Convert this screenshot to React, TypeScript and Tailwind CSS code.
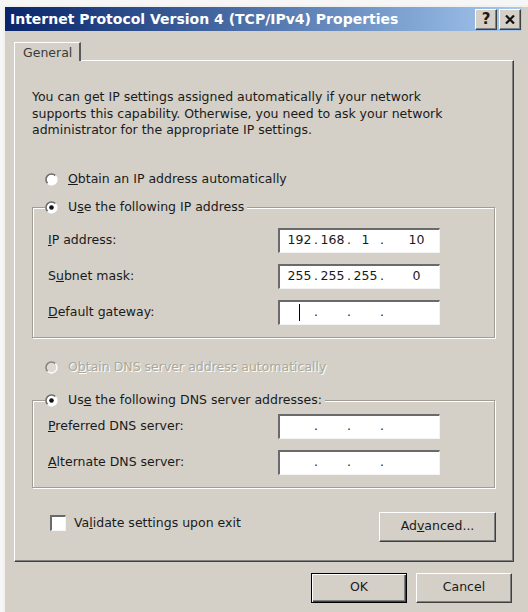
import React from "react";

// Classic 3D bevels shared by the controls
const raised =
  "border border-t-white border-l-white border-r-[#404040] border-b-[#404040] shadow-[inset_-1px_-1px_0_#808080]";
const sunken =
  "border-l-2 border-t-2 border-r border-b border-l-[#6a6a6a] border-t-[#6a6a6a] border-r-[#f4f4f4] border-b-[#f4f4f4]";

function Radio({ checked = false, disabled = false }: { checked?: boolean; disabled?: boolean }) {
  return (
    <svg width="13" height="13" viewBox="0 0 13 13" className="shrink-0">
      <circle cx="6.5" cy="6.5" r="5.5" fill={disabled ? "#dedad3" : "#fff"} />
      <path d="M2.6 10.4 A5.5 5.5 0 0 1 10.4 2.6" fill="none" stroke={disabled ? "#86837c" : "#6a6a6a"} strokeWidth="1.5" />
      <path d="M10.4 2.6 A5.5 5.5 0 0 1 2.6 10.4" fill="none" stroke="#fff" strokeWidth="1.3" />
      {checked && <circle cx="6.5" cy="6.5" r="2.3" fill="#111" />}
    </svg>
  );
}

function IpBox({ octets, caret = false }: { octets?: string[]; caret?: boolean }) {
  const vals = octets ?? ["", "", "", ""];
  return (
    <div className={`flex h-[25px] w-[162px] items-center bg-white pl-[7px] ${sunken}`}>
      {vals.map((v, i) => (
        <React.Fragment key={i}>
          <div className={`flex h-full items-center justify-center ${i === 3 ? "flex-1 pl-[8px]" : "w-[25px]"}`}>
            {caret && i === 0 ? <div className="h-[17px] w-px bg-black" /> : v}
          </div>
          {i < 3 && <div className="w-[8px] text-center">.</div>}
        </React.Fragment>
      ))}
    </div>
  );
}

function Field({ label, octets, caret }: { label: React.ReactNode; octets?: string[]; caret?: boolean }) {
  return (
    <div className="ml-[3px] flex items-center">
      <div className="w-[230px]">{label}</div>
      <IpBox octets={octets} caret={caret} />
    </div>
  );
}

export default function App() {
  return (
    <div className="h-[612px] w-[528px] overflow-hidden bg-[#f6f6f6] font-['DejaVu_Sans',sans-serif] text-[12.5px] text-[#1a1a1a]">
      <div className="ml-[3px] mt-[5px] h-[607px] border-l-2 border-t-2 border-l-[#f2f1ee] border-t-[#f2f1ee] bg-[#d4d0c8]">
        {/* caption */}
        <div className="mr-[6px] flex h-[24px] items-center bg-gradient-to-r from-[#0a246a] to-[#a6caf0] pl-[5px] pr-[1px]">
          <span className="flex-1 text-[14px] font-bold text-white">Internet Protocol Version 4 (TCP/IPv4) Properties</span>
          <div className="flex gap-[2px]">
            <div className={`flex h-[21px] w-[22px] items-center justify-center bg-[#d4d0c8] text-[15px] font-bold leading-none ${raised}`}>?</div>
            <div className={`flex h-[21px] w-[22px] items-center justify-center bg-[#d4d0c8] ${raised}`}>
              <svg width="10" height="9" viewBox="0 0 10 9">
                <path d="M1 0.5 L9 8.5 M9 0.5 L1 8.5" stroke="#111" strokeWidth="2.2" />
              </svg>
            </div>
          </div>
        </div>

        {/* tab strip */}
        <div className="ml-[9px] mt-[11px] w-[500px]">
          <div className="relative z-10 -mb-px flex h-[19px] w-[67px] items-center border-l border-t border-r-2 border-l-white border-t-white border-r-[#5a5a5a] bg-[#d4d0c8] pl-[8px] pt-[3px] text-[#3a3a3a]">
            General
          </div>

          {/* tab page */}
          <div className="border border-l-white border-t-white border-r-[#404040] border-b-[#404040] pb-[19px] pl-[17px] pr-[18px] pt-[28px] shadow-[inset_-1px_-1px_0_#808080]">
            <p className="leading-[16.5px]">
              You can get IP settings assigned automatically if your network
              <br />
              supports this capability. Otherwise, you need to ask your network
              <br />
              administrator for the appropriate IP settings.
            </p>

            <div className="ml-[13px] mt-[32px] flex h-[18px] items-center gap-[10px]">
              <Radio />
              <span>
                <u>O</u>btain an IP address automatically
              </span>
            </div>

            <fieldset className="mt-[10px] border border-[#a19d95] pb-[12px] pl-[12px] shadow-[inset_1px_1px_0_#fff,1px_1px_0_#fff]">
              <legend className="flex h-[18px] items-center gap-[10px] bg-[#d4d0c8] pr-[3px]">
                <Radio checked />
                <span>
                  U<u>s</u>e the following IP address
                </span>
              </legend>
              <div className="flex flex-col gap-[11px] pt-[11px]">
                <Field label={<><u>I</u>P address:</>} octets={["192", "168", "1", "10"]} />
                <Field label={<>S<u>u</u>bnet mask:</>} octets={["255", "255", "255", "0"]} />
                <Field label={<><u>D</u>efault gateway:</>} caret />
              </div>
            </fieldset>

            <div className="ml-[13px] mt-[21px] flex h-[18px] items-center gap-[10px] text-[#aca899] [text-shadow:1px_1px_0_#fff]">
              <Radio disabled />
              <span>
                O<u>b</u>tain DNS server address automatically
              </span>
            </div>

            <fieldset className="mt-[15px] border border-[#a19d95] pb-[12px] pl-[12px] shadow-[inset_1px_1px_0_#fff,1px_1px_0_#fff]">
              <legend className="flex h-[18px] items-center gap-[10px] bg-[#d4d0c8] pr-[3px]">
                <Radio checked />
                <span>
                  Us<u>e</u> the following DNS server addresses:
                </span>
              </legend>
              <div className="flex flex-col gap-[11px] pt-[4px]">
                <Field label={<><u>P</u>referred DNS server:</>} />
                <Field label={<><u>A</u>lternate DNS server:</>} />
              </div>
            </fieldset>

            <div className="-mr-px mt-[24px] flex items-start justify-between">
              <div className="ml-[18px] mt-[2px] flex items-center gap-[8px]">
                <div className={`h-[16px] w-[16px] bg-white ${sunken}`} />
                <span>
                  Va<u>l</u>idate settings upon exit
                </span>
              </div>
              <div className={`flex h-[30px] w-[117px] items-center justify-center bg-[#d4d0c8] ${raised}`}>
                Ad<u>v</u>anced...
              </div>
            </div>
          </div>

          {/* dialog buttons */}
          <div className="mr-[2px] mt-[11px] flex justify-end gap-[9px]">
            <div className="flex h-[30px] w-[96px] items-center justify-center border border-black bg-[#d4d0c8] shadow-[inset_1px_1px_0_#fff,inset_-1px_-1px_0_#404040,inset_-2px_-2px_0_#808080]">
              OK
            </div>
            <div className={`flex h-[30px] w-[96px] items-center justify-center bg-[#d4d0c8] ${raised}`}>Cancel</div>
          </div>
        </div>
      </div>
    </div>
  );
}
